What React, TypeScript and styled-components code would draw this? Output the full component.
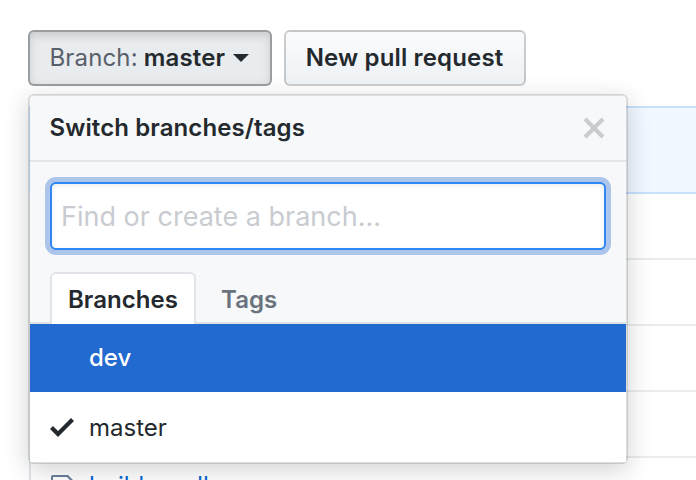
import React from "react";
import styled, { createGlobalStyle } from "styled-components";

const Global = createGlobalStyle`
  html, body { margin: 0; padding: 0; background: #fff; }
  body { width: 696px; height: 480px; overflow: hidden; font-family: Inter, "Liberation Sans", sans-serif; color: #24292e; }
`;

const Page = styled.div`
  position: relative;
  width: 696px;
  height: 480px;
  overflow: hidden;
  padding: 30px 0 0 28px;
  box-sizing: border-box;
`;

const Toolbar = styled.div`
  display: flex;
  gap: 12px;
  height: 56px;
`;

const Button = styled.button<{ $active?: boolean }>`
  box-sizing: border-box;
  height: 56px;
  padding: 0 ${(p) => (p.$active ? "20.5px" : "21px")} 2px ${(p) => (p.$active ? "19.5px" : "20px")};
  display: flex;
  align-items: center;
  border-radius: 6px;
  font: 600 24px Inter, "Liberation Sans", sans-serif;
  letter-spacing: 0.15px;
  color: #24292e;
  border: 2px solid ${(p) => (p.$active ? "rgba(27,31,35,.38)" : "rgba(27,31,35,.2)")};
  background: ${(p) => (p.$active ? "#e9ecef" : "linear-gradient(-180deg, #fafbfc, #eff3f6 90%)")};
  box-shadow: ${(p) => (p.$active ? "inset 0 4px 8px rgba(27,31,35,.15)" : "none")};
`;

const Muted = styled.span`
  color: #586069;
  font-weight: 400;
  margin-right: 6px;
`;

const Caret = styled.span`
  width: 0;
  height: 0;
  margin: 2px 0 0 8px;
  border-style: solid;
  border-width: 8px 8px 0;
  border-color: #24292e transparent transparent;
`;

const FileTable = styled.div`
  margin: 20px 0 0 1px;
  border-left: 2px solid #e1e4e8;
`;

const Commit = styled.div`
  box-sizing: border-box;
  height: 88px;
  margin-left: -2px;
  background: #f1f8ff;
  border: 2px solid #c8e1ff;
  border-right: 0;
`;

const FileRow = styled.div`
  box-sizing: border-box;
  height: 66px;
  padding: 15px 0 0 20px;
  display: flex;
  align-items: flex-start;
  gap: 14px;
  border-bottom: 2px solid #eaecef;
`;

const FileName = styled.span`
  margin-top: -2px;
  font: 400 24px/30px Inter, "Liberation Sans", sans-serif;
  color: #0366d6;
`;

const Menu = styled.div`
  position: absolute;
  left: 28px;
  top: 94px;
  width: 600px;
  height: 370px;
  box-sizing: border-box;
  background: #fff;
  background-clip: padding-box;
  border: 2px solid rgba(27,31,35,.15);
  border-radius: 6px;
  box-shadow: 0 6px 24px rgba(27,31,35,.2);
  display: flex;
  flex-direction: column;
`;

const MenuHeader = styled.div`
  box-sizing: border-box;
  height: 66px;
  padding: 0 20px 2px 19.5px;
  display: flex;
  align-items: center;
  justify-content: space-between;
  background: #f6f8fa;
  border-bottom: 2px solid #e1e4e8;
  border-radius: 4px 4px 0 0;
  font-weight: 600;
  font-size: 24px;
  letter-spacing: 0.1px;
`;

const CloseSlot = styled.span`
  display: flex;
  margin: 2px 0 0;
`;

const Filter = styled.div`
  padding: 20px 20px 22px;
  background: #f6f8fa;
`;

const FilterInput = styled.input`
  display: block;
  box-sizing: border-box;
  width: 100%;
  height: 68px;
  padding: 0 9px;
  border: 2px solid #2f86f5;
  border-radius: 6px;
  background: #fff;
  outline: none;
  box-shadow: inset 0 2px 4px rgba(27,31,35,.075), 0 0 0 5px rgba(3,80,200,.3);
  font: 400 27px Inter, "Liberation Sans", sans-serif;
  color: #24292e;
  &::placeholder { color: #c8ccd1; opacity: 1; }
`;

const Tabs = styled.div`
  box-sizing: border-box;
  height: 52px;
  padding: 0 20px;
  display: flex;
  background: #f6f8fa;
  border-bottom: 2px solid #dfe3e6;
`;

const Tab = styled.div<{ $selected?: boolean }>`
  box-sizing: border-box;
  height: 52px;
  padding: 0 16px;
  margin-left: ${(p) => (p.$selected ? "0" : "7px")};
  display: flex;
  align-items: center;
  font-size: 24px;
  font-weight: 600;
  letter-spacing: 0.05px;
  color: ${(p) => (p.$selected ? "#24292e" : "#6a737d")};
  border: 2px solid ${(p) => (p.$selected ? "#e1e4e8" : "transparent")};
  border-bottom: 0;
  border-radius: 6px 6px 0 0;
  background: ${(p) => (p.$selected ? "#fff" : "transparent")};
`;

const BranchRow = styled.div<{ $highlight?: boolean }>`
  box-sizing: border-box;
  height: ${(p) => (p.$highlight ? "68px" : "70px")};
  padding: ${(p) => (p.$highlight ? "0 0 2px 20px" : "0 0 0 20px")};
  display: flex;
  align-items: center;
  font-size: 24px;
  font-weight: ${(p) => (p.$highlight ? 500 : 400)};
  color: ${(p) => (p.$highlight ? "#fff" : "#24292e")};
  background: ${(p) => (p.$highlight ? "#2269d0" : "#fff")};
`;

const CheckSlot = styled.span`
  width: 39px;
  display: flex;
  align-items: center;
`;

const Close = () => (
  <svg width="24" height="32" viewBox="0 0 12 16" fill="#c9cbcd">
    <path d="M7.48 8l3.75 3.75-1.48 1.48L6 9.48l-3.75 3.75-1.48-1.48L4.52 8 .77 4.25l1.48-1.48L6 6.52l3.75-3.75 1.48 1.48L7.48 8z" />
  </svg>
);

const Check = () => (
  <svg width="24" height="32" viewBox="0 0 12 16" fill="#24292e">
    <path d="M12 5l-8 8-4-4 1.5-1.5L4 10l6.5-6.5L12 5z" />
  </svg>
);

const FileIcon = () => (
  <svg width="24" height="32" viewBox="0 0 12 16" fill="#6a7f9c">
    <path d="M6 5H2V4h4v1zM2 8h7V7H2v1zm0 2h7V9H2v1zm0 2h7v-1H2v1zm10-7.5V14c0 .55-.45 1-1 1H1c-.55 0-1-.45-1-1V2c0-.55.45-1 1-1h7.5L12 4.5zM11 5L8 2H1v12h10V5z" />
  </svg>
);

export default function App() {
  return (
    <Page>
      <Global />
      <Toolbar>
        <Button $active>
          <Muted>Branch:</Muted>master<Caret />
        </Button>
        <Button>New pull request</Button>
      </Toolbar>
      <FileTable>
        <Commit />
        <FileRow />
        <FileRow />
        <FileRow />
        <FileRow />
        <FileRow>
          <FileIcon />
          <FileName>build.gradle</FileName>
        </FileRow>
      </FileTable>
      <Menu>
        <MenuHeader>
          Switch branches/tags
          <CloseSlot>
            <Close />
          </CloseSlot>
        </MenuHeader>
        <Filter>
          <FilterInput placeholder="Find or create a branch..." readOnly />
        </Filter>
        <Tabs>
          <Tab $selected>Branches</Tab>
          <Tab>Tags</Tab>
        </Tabs>
        <BranchRow $highlight>
          <CheckSlot />
          dev
        </BranchRow>
        <BranchRow>
          <CheckSlot>
            <Check />
          </CheckSlot>
          master
        </BranchRow>
      </Menu>
    </Page>
  );
}
